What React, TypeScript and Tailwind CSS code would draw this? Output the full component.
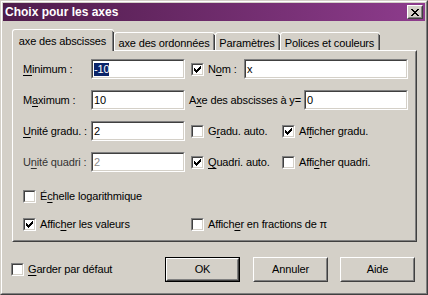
import React from "react";

const FONT = "font-['Liberation_Sans',Arial,sans-serif]";

function L({ t, u, className = "" }: { t: string; u?: number; className?: string }) {
  if (u === undefined) return <span className={className}>{t}</span>;
  return (
    <span className={className}>
      {t.slice(0, u)}
      <span className="underline underline-offset-[2px]">{t.slice(u, u + 1)}</span>
      {t.slice(u + 1)}
    </span>
  );
}

function Sunken({ className = "", children }: { className?: string; children?: React.ReactNode }) {
  return (
    <div className={`border border-t-[#808080] border-l-[#808080] border-r-white border-b-white ${className}`}>
      <div className="h-full w-full border border-t-[#404040] border-l-[#404040] border-r-[#d4d0c8] border-b-[#d4d0c8] bg-white flex items-center pl-[1px] overflow-hidden">
        {children}
      </div>
    </div>
  );
}

function Check({ checked }: { checked?: boolean }) {
  return (
    <div className="w-[13px] h-[13px] shrink-0 border border-t-[#808080] border-l-[#808080] border-r-white border-b-white">
      <div className="w-full h-full border border-t-[#404040] border-l-[#404040] border-r-[#d4d0c8] border-b-[#d4d0c8] bg-white flex items-center justify-center">
        {checked && (
          <svg width="7" height="7" viewBox="0 0 7 7" shapeRendering="crispEdges">
            <path d="M0 2h1v3h-1z M1 3h1v3h-1z M2 4h1v3h-1z M3 3h1v3h-1z M4 2h1v3h-1z M5 1h1v3h-1z M6 0h1v3h-1z" fill="#000" />
          </svg>
        )}
      </div>
    </div>
  );
}

function CheckLabel({ checked, t, u, className = "" }: { checked?: boolean; t: string; u?: number; className?: string }) {
  return (
    <div className={`flex items-center ${className}`}>
      <Check checked={checked} />
      <L t={t} u={u} className="ml-[4px] whitespace-nowrap" />
    </div>
  );
}

function Button({ label, def }: { label: string; def?: boolean }) {
  const inner = (
    <div className="h-full w-full border border-t-white border-l-white border-r-[#404040] border-b-[#404040]">
      <div className="h-full w-full border border-t-[#d4d0c8] border-l-[#d4d0c8] border-r-[#808080] border-b-[#808080] flex items-center justify-center">
        {label}
      </div>
    </div>
  );
  if (def) return <div className="w-[75px] h-[25px] border border-black">{inner}</div>;
  return <div className="w-[75px] h-[25px]">{inner}</div>;
}

function Tab({ label, selected, w }: { label: string; selected?: boolean; w: string }) {
  if (selected) {
    return (
      <div className={`${w} h-[22px] -mb-px relative z-10 bg-[#d4d0c8] border-t border-l border-t-white border-l-white rounded-tl-[3px] rounded-tr-[3px] flex`}>
        <div className="flex-1 flex items-start pt-[3px] justify-center">{label}</div>
        <div className="w-px bg-[#808080] mt-[1px]" />
        <div className="w-px bg-[#404040] mt-[2px]" />
      </div>
    );
  }
  return (
    <div className={`${w} h-[18px] bg-[#d4d0c8] border-t border-l border-t-white border-l-white rounded-tl-[3px] rounded-tr-[3px] flex`}>
      <div className="flex-1 flex items-start pt-[2px] justify-center">{label}</div>
      <div className="w-px bg-[#808080] mt-[1px]" />
      <div className="w-px bg-[#404040] mt-[2px]" />
    </div>
  );
}

export default function App() {
  return (
    <div className={`w-[428px] h-[295px] bg-[#d4d0c8] border border-t-[#d4d0c8] border-l-[#d4d0c8] border-r-[#404040] border-b-[#404040] ${FONT} text-[11px] tracking-[-0.15px] text-black`}>
      <div className="h-full border border-t-white border-l-white border-r-[#808080] border-b-[#808080] p-px flex flex-col">
        {/* title bar */}
        <div className="h-[18px] bg-gradient-to-r from-[#4f1c4b] to-[#8e3c8d] flex items-center pl-[2px] pr-[2px]">
          <span className="text-white font-bold text-[12px] tracking-normal flex-1">Choix pour les axes</span>
          <div className="w-[16px] h-[14px] border border-t-white border-l-white border-r-[#404040] border-b-[#404040]">
            <div className="w-full h-full border border-t-[#d4d0c8] border-l-[#d4d0c8] border-r-[#808080] border-b-[#808080] bg-[#d4d0c8] flex items-center justify-center">
              <svg width="8" height="7" viewBox="0 0 8 7" shapeRendering="crispEdges">
                <path d="M0 0h2v1h-2z M6 0h2v1h-2z M1 1h2v1h-2z M5 1h2v1h-2z M2 2h4v1h-4z M3 3h2v1h-2z M2 4h4v1h-4z M1 5h2v1h-2z M5 5h2v1h-2z M0 6h2v1h-2z M6 6h2v1h-2z" fill="#000" />
              </svg>
            </div>
          </div>
        </div>

        {/* body */}
        <div className="flex-1 pl-[9px] pr-[8px] pt-[8px] flex flex-col">
          <div className="h-[21px] flex items-end">
            <Tab label="axe des abscisses" selected w="w-[102px]" />
            <Tab label="axe des ordonnées" w="w-[101px]" />
            <Tab label="Paramètres" w="w-[65px]" />
            <Tab label="Polices et couleurs" w="w-[100px]" />
          </div>
          {/* panel */}
          <div className="h-[192px] border border-t-white border-l-white border-r-[#404040] border-b-[#404040]">
            <div className="h-full border border-t-[#d4d0c8] border-l-[#d4d0c8] border-r-[#808080] border-b-[#808080] pl-[9px] pt-[7px] flex flex-col">
              {/* row 1 */}
              <div className="h-[20px] flex items-center">
                <L t="Minimum :" u={0} className="w-[68px]" />
                <Sunken className="w-[94px] h-[20px]">
                  <span className="bg-[#0a246a] text-white leading-[13px]">-10</span>
                </Sunken>
                <CheckLabel checked t="Nom :" u={1} className="ml-[6px] w-[53px]" />
                <Sunken className="w-[164px] h-[20px]">
                  <span>x</span>
                </Sunken>
              </div>
              {/* row 2 */}
              <div className="h-[20px] mt-[11px] flex items-center">
                <L t="Maximum :" u={1} className="w-[68px]" />
                <Sunken className="w-[94px] h-[20px]">
                  <span>10</span>
                </Sunken>
                <L t="Axe des abscisses à y=" u={1} className="ml-[4px] w-[115px] whitespace-nowrap" />
                <Sunken className="w-[104px] h-[20px]">
                  <span>0</span>
                </Sunken>
              </div>
              {/* row 3 */}
              <div className="h-[20px] mt-[11px] flex items-center">
                <L t="Unité gradu. :" u={0} className="w-[68px] whitespace-nowrap" />
                <Sunken className="w-[94px] h-[20px]">
                  <span>2</span>
                </Sunken>
                <CheckLabel t="Gradu. auto." u={1} className="ml-[6px] w-[91px]" />
                <CheckLabel checked t="Afficher gradu." u={2} />
              </div>
              {/* row 4 */}
              <div className="h-[20px] mt-[11px] flex items-center">
                <L t="Unité quadri :" u={1} className="w-[68px] whitespace-nowrap text-[#333]" />
                <Sunken className="w-[94px] h-[20px]">
                  <span className="text-[#8a8a8a]">2</span>
                </Sunken>
                <CheckLabel checked t="Quadri. auto." u={0} className="ml-[6px] w-[91px]" />
                <CheckLabel t="Afficher quadri." u={4} />
              </div>
              {/* row 5 */}
              <div className="h-[13px] mt-[18px] flex items-center">
                <CheckLabel t="Échelle logarithmique" u={1} />
              </div>
              {/* row 6 */}
              <div className="h-[13px] mt-[15px] flex items-center">
                <CheckLabel checked t="Afficher les valeurs" u={5} className="w-[168px]" />
                <CheckLabel t="Afficher en fractions de π" u={6} />
              </div>
            </div>
          </div>
          {/* bottom */}
          <div className="h-[25px] mt-[15px] flex items-center -ml-[1px]">
            <CheckLabel t="Garder par défaut" u={0} className="w-[154px]" />
            <Button label="OK" def />
            <div className="w-[13px]" />
            <Button label="Annuler" />
            <div className="w-[12px]" />
            <Button label="Aide" />
          </div>
        </div>
      </div>
    </div>
  );
}
